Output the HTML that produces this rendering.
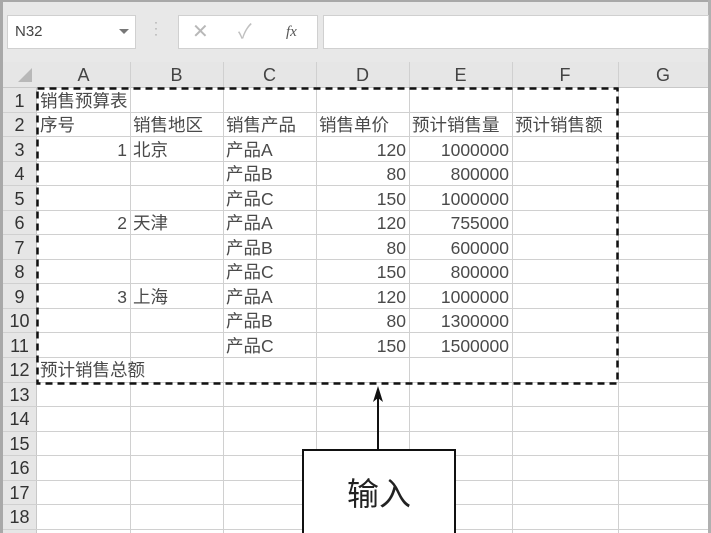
<!DOCTYPE html>
<html><head><meta charset="utf-8"><style>
*{margin:0;padding:0;box-sizing:border-box}
body{width:711px;height:533px;overflow:hidden;background:#fff;position:relative;font-family:"Liberation Sans","Noto Sans CJK SC",sans-serif;color:#4a4a4a}
.a{position:absolute}
.c{position:absolute;font-size:17.5px;line-height:24px;white-space:nowrap}
</style></head><body>
<div class="a" style="left:0;top:0;width:711px;height:62px;background:#e8e8e8;border-top:2px solid #a8a8a8"></div>
<div class="a" style="left:0;top:0;width:3px;height:533px;background:#a8a8a8"></div>
<div class="a" style="left:708px;top:0;width:3px;height:533px;background:#b0b0b0"></div>
<div class="a" style="left:7px;top:15px;width:129px;height:34px;background:#fff;border:1px solid #d0d0d0"></div>
<div class="c" style="left:15px;top:20px;font-size:15px;color:#444">N32</div>
<div class="a" style="left:119px;top:29px;border-left:5px solid transparent;border-right:5px solid transparent;border-top:5px solid #777"></div>
<div class="c" style="left:154px;top:19px;font-size:12px;color:#999;line-height:6px">·<br>·<br>·</div>
<div class="a" style="left:178px;top:15px;width:140px;height:34px;background:#fff;border:1px solid #d0d0d0"></div>
<div class="c" style="left:192px;top:20px;font-size:20px;color:#b8b8b8">✕</div>
<div class="c" style="left:238px;top:20px;font-size:20px;color:#c0c0c0">✓</div>
<div class="c" style="left:286px;top:20px;font-size:15px;color:#555;font-style:italic;font-family:'Liberation Serif',serif">fx</div>
<div class="a" style="left:323px;top:15px;width:386px;height:34px;background:#fff;border:1px solid #d0d0d0"></div>
<div class="a" style="left:3px;top:62px;width:705px;height:26px;background:#e6e6e6;border-bottom:1px solid #c8c8c8"></div>
<div class="a" style="left:3px;top:88px;width:34px;height:445px;background:#e6e6e6;border-right:1px solid #c8c8c8"></div>
<div class="a" style="left:18px;top:68px;border-left:14px solid transparent;border-bottom:14px solid #b8b8b8"></div>
<svg class="a" style="left:0;top:0" width="711" height="533">
<g stroke="#d0d0d0" stroke-width="1">
<line x1="130.5" y1="62" x2="130.5" y2="533"/><line x1="223.5" y1="62" x2="223.5" y2="533"/><line x1="316.5" y1="62" x2="316.5" y2="533"/><line x1="409.5" y1="62" x2="409.5" y2="533"/><line x1="512.5" y1="62" x2="512.5" y2="533"/><line x1="618.5" y1="62" x2="618.5" y2="533"/>
<line x1="3" y1="112.5" x2="708" y2="112.5"/><line x1="3" y1="136.5" x2="708" y2="136.5"/><line x1="3" y1="161.5" x2="708" y2="161.5"/><line x1="3" y1="185.5" x2="708" y2="185.5"/><line x1="3" y1="210.5" x2="708" y2="210.5"/><line x1="3" y1="234.5" x2="708" y2="234.5"/><line x1="3" y1="259.5" x2="708" y2="259.5"/><line x1="3" y1="283.5" x2="708" y2="283.5"/><line x1="3" y1="308.5" x2="708" y2="308.5"/><line x1="3" y1="332.5" x2="708" y2="332.5"/><line x1="3" y1="357.5" x2="708" y2="357.5"/><line x1="3" y1="382.5" x2="708" y2="382.5"/><line x1="3" y1="406.5" x2="708" y2="406.5"/><line x1="3" y1="431.5" x2="708" y2="431.5"/><line x1="3" y1="455.5" x2="708" y2="455.5"/><line x1="3" y1="480.5" x2="708" y2="480.5"/><line x1="3" y1="504.5" x2="708" y2="504.5"/><line x1="3" y1="529.5" x2="708" y2="529.5"/>
</g>
<rect x="37.5" y="88.5" width="580" height="295" fill="none" stroke="#111" stroke-width="2.5" stroke-dasharray="7,5"/>
<line x1="378" y1="450" x2="378" y2="396" stroke="#111" stroke-width="2"/>
<polygon points="378,386 373,402 378,398 383,402" fill="#111"/>
<rect x="303" y="450" width="152" height="85" fill="#fff" stroke="#111" stroke-width="2"/>
<text x="379" y="505" font-size="32" text-anchor="middle" font-family="Noto Sans CJK SC,sans-serif" fill="#222">输入</text>
</svg>
<div id="g"></div>
<script>
var H=['A','B','C','D','E','F','G'],X=[37,130,223,316,409,512,618,708],s='';
for(var i=0;i<7;i++)s+='<div class="c" style="left:'+X[i]+'px;top:63px;width:'+(X[i+1]-X[i])+'px;text-align:center;font-size:18px;color:#444">'+H[i]+'</div>';
function ry(r){return 88+(r-1)*24.5}
for(var r=1;r<=18;r++)s+='<div class="c" style="left:3px;top:'+(ry(r)+0.5)+'px;width:33px;text-align:center;font-size:18px;color:#333">'+r+'</div>';
var d=[[1,0,'销售预算表'],[2,0,'序号'],[2,1,'销售地区'],[2,2,'销售产品'],[2,3,'销售单价'],[2,4,'预计销售量'],[2,5,'预计销售额'],[12,0,'预计销售总额'],
[3,1,'北京'],[6,1,'天津'],[9,1,'上海']];
var prod=['产品A','产品B','产品C'],pr=[120,80,150,120,80,150,120,80,150],q=[1000000,800000,1000000,755000,600000,800000,1000000,1300000,1500000];
for(var k=0;k<9;k++){d.push([3+k,2,prod[k%3]]);d.push([3+k,3,pr[k],1]);d.push([3+k,4,q[k],1]);}
d.push([3,0,1,1]);d.push([6,0,2,1]);d.push([9,0,3,1]);
d.forEach(function(e){var x=X[e[1]],w=X[e[1]+1]-x;s+='<div class="c" style="top:'+(ry(e[0])+0.5)+'px;left:'+(x+3)+'px;width:'+(w-6)+'px;'+(e[3]?'text-align:right;':'')+'">'+e[2]+'</div>';});
document.getElementById('g').innerHTML=s;
</script>
</body></html>
